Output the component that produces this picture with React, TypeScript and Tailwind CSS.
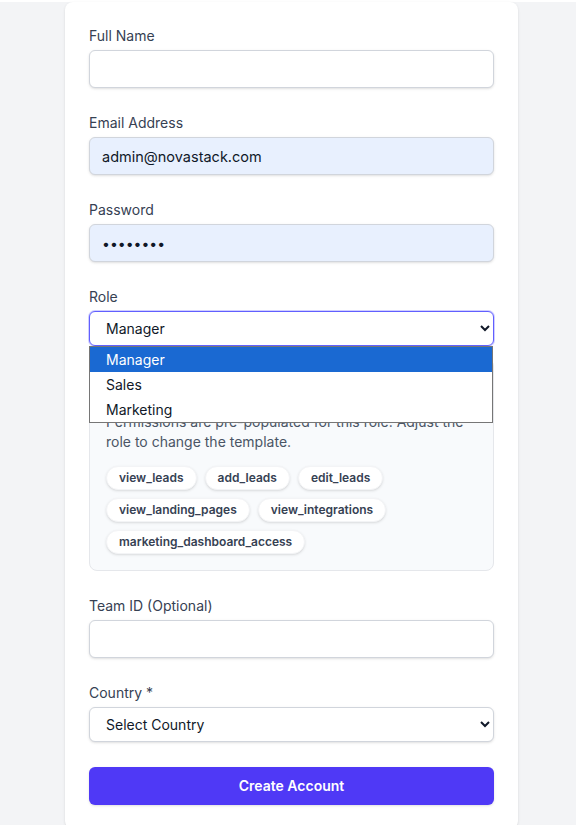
import { useState } from 'react';

const permissions = [
  'view_leads',
  'add_leads',
  'edit_leads',
  'view_landing_pages',
  'view_integrations',
  'marketing_dashboard_access',
];

const roles = ['Manager', 'Sales', 'Marketing'];

const inputClass =
  'block w-full h-[38px] rounded-md border border-gray-300 bg-white px-3 text-sm text-gray-900 shadow-sm outline-none';

function Label({ children }: { children: React.ReactNode }) {
  return <label className="block text-sm text-gray-700 mb-1 leading-5">{children}</label>;
}

export default function App() {
  const [role, setRole] = useState('Manager');

  return (
    <div className="min-h-screen bg-gray-100 font-['Inter',sans-serif]">
      <div className="ml-[65px] mt-[2px] w-[453px] rounded-lg bg-white p-6 shadow-sm">
        <form className="flex flex-col gap-[25px]" onSubmit={(e) => e.preventDefault()}>
          <div>
            <Label>Full Name</Label>
            <input type="text" className={inputClass} />
          </div>

          <div>
            <Label>Email Address</Label>
            <input
              type="email"
              defaultValue="admin@novastack.com"
              className={inputClass + ' !bg-[#e8f0fe] text-[14.5px]'}
            />
          </div>

          <div>
            <Label>Password</Label>
            <input
              type="password"
              defaultValue="password"
              className={inputClass + ' !bg-[#e8f0fe]'}
            />
          </div>

          <div>
            <Label>Role</Label>
            <div className="relative">
              <select
                value={role}
                onChange={(e) => setRole(e.target.value)}
                className="block w-full h-[35px] rounded-md border border-indigo-500 bg-white px-3 text-sm text-gray-900 ring-1 ring-indigo-500/30 outline-none"
              >
                {roles.map((r) => (
                  <option key={r}>{r}</option>
                ))}
              </select>

              {/* open dropdown list */}
              <div className="absolute left-0 top-[35px] z-10 w-[404px] border border-[#767676] bg-white">
                {roles.map((r) => (
                  <div
                    key={r}
                    className={
                      r === role
                        ? 'h-[25px] pl-4 text-sm leading-[25px] bg-[#1a69d2] text-white'
                        : 'h-[25px] pl-4 text-sm leading-[25px] text-gray-900'
                    }
                  >
                    {r}
                  </div>
                ))}
              </div>
            </div>

            <div className="mt-3 rounded-lg border border-gray-200 bg-slate-50 p-4">
              <p className="text-sm font-semibold text-gray-700 leading-5 mb-[17px]">Default Permissions</p>
              <p className="text-sm text-gray-600 leading-5">
                Permissions are pre-populated for this role. Adjust the role to change the template.
              </p>
              <div className="mt-[14px] flex flex-wrap gap-2">
                {permissions.map((p) => (
                  <span
                    key={p}
                    className="h-6 rounded-full border border-gray-100 bg-white px-3 text-xs font-semibold leading-[22px] text-gray-700 shadow-sm"
                  >
                    {p}
                  </span>
                ))}
              </div>
            </div>
          </div>

          <div>
            <Label>Team ID (Optional)</Label>
            <input type="text" className={inputClass} />
          </div>

          <div>
            <Label>Country *</Label>
            <select className="block w-full h-[35px] rounded-md border border-gray-300 bg-white px-3 text-sm text-gray-900 shadow-sm outline-none">
              <option>Select Country</option>
            </select>
          </div>

          <button
            type="submit"
            className="h-[38px] w-full rounded-md bg-indigo-600 text-sm font-semibold text-white shadow-sm"
          >
            Create Account
          </button>
        </form>
      </div>
    </div>
  );
}
